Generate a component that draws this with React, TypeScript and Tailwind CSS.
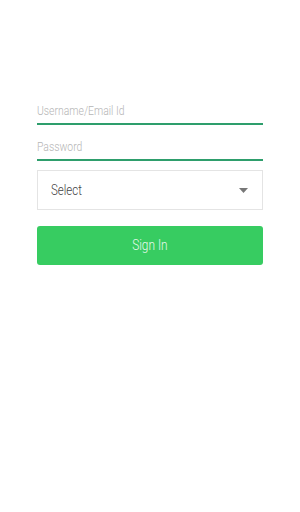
export default function App() {
  return (
    <div className="min-h-[512px] w-[300px] bg-white font-['Roboto',sans-serif]">
      <form className="flex flex-col px-[37px] pt-[93px]">
        <div className="flex h-[32px] items-center border-b-2 border-[#2e9e6c] pt-[6px]">
          <span className="origin-left scale-x-[0.8] whitespace-nowrap text-[13px] font-light text-[#b5b5b5]">
            Username/Email Id
          </span>
        </div>
        <div className="mt-[4px] flex h-[32px] items-center border-b-2 border-[#2e9e6c] pt-[6px]">
          <span className="origin-left scale-x-[0.8] whitespace-nowrap text-[13px] font-light text-[#b5b5b5]">
            Password
          </span>
        </div>
        <div className="mt-[9px] flex h-[40px] items-center justify-between border border-[#e4e4e4] pl-[13px] pr-[14px]">
          <span className="origin-left scale-x-[0.82] text-[14px] font-light text-[#444]">Select</span>
          <svg width="9" height="5" viewBox="0 0 9 5">
            <path d="M0 0h9L4.5 5z" fill="#777" />
          </svg>
        </div>
        <button
          type="button"
          className="mt-[16px] flex h-[39px] items-center justify-center rounded-[3px] bg-[#37cc61]"
        >
          <span className="scale-x-[0.85] text-[14px] font-light text-[#e9f9ee]">Sign In</span>
        </button>
      </form>
    </div>
  );
}
